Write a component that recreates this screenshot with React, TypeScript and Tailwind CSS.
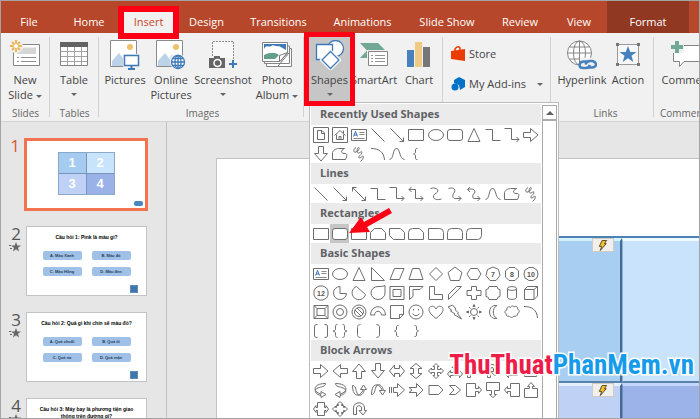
import React from "react";

type ShapeDef = { name: string; d?: string; node?: React.ReactNode };

const LINES: ShapeDef[] = [
  { name: "Line", d: "M1.5 1.5L14.5 14.5" },
  { name: "Arrow", d: "M1.5 1.5L14.5 14.5M10.5 14.5H14.5V10.5" },
  { name: "Double Arrow", d: "M1.5 1.5L14.5 14.5M10.5 14.5H14.5V10.5M1.5 5.5V1.5H5.5" },
  { name: "Elbow Connector", d: "M.5 2.5H7.5V13.5H15.5" },
  { name: "Elbow Arrow Connector", d: "M.5 1.5H7.5V12.5H15M12.5 10L15 12.5L12.5 15" },
  { name: "Elbow Double Connector", d: "M1 3.5H7.5V12.5H15M12.5 10L15 12.5L12.5 15M3.5 1L1 3.5L3.5 6" },
  { name: "Curved Connector", d: "M2.5 2.5C7 1 11 3 9.5 6C8 8 5 8 5.5 11C6 14 10 14 13.5 13" },
  { name: "Curved Arrow Connector", d: "M1.5 2.5C6 1 9 3 7.5 6C5 9 5 13 9 12.5H14M11.5 10L14 12.5L11.5 15" },
  { name: "Curved Double Connector", d: "M1.5 3.5C7 2 10 4 8.5 7C6 9 6 13 9 12.5H14M11.5 10L14 12.5L11.5 15M4 1L1.5 3.5L4 6" },
  { name: "Curve", d: "M.5 13.5C5 13 3.5 2.5 7.5 2.5S10 13 15.5 13.5" },
  { name: "Freeform", d: "M.5 13.5V6.5C2 3 4 3 6.5 2.5H12.5C8 5 9 7 12 7.5C16 7 15 10 13.5 13.5Z" },
  { name: "Scribble", d: "M5 1.5C2 3 2 7 5 6C8 5 9 1 7.5 1.5C5 3 6 9 9 6.5C12 4 11 8 9 9.5C6 12 9 13 11 10.5C13 9 13 13 9.5 15.5" },
];

const [line, arrow, , elbow, elbowArrow, , , , , curve, freeform, scribble] = LINES;

const textBox: ShapeDef = {
  name: "Text Box",
  node: (
    <>
      <path d="M.5 2.5H15.5V13.5H.5Z" />
      <path d="M2.5 9.5L4.5 4.5L6.5 9.5M3 8H6" stroke="#2f6fb5" />
      <path d="M8.5 5.5H13.5M8.5 7.5H13.5M2.5 11.5H13.5" stroke="#8a8a8a" />
    </>
  ),
};
const rect: ShapeDef = { name: "Rectangle", d: "M.5 2.5H15.5V13.5H.5Z" };
const oval: ShapeDef = { name: "Oval", node: <ellipse cx="8" cy="8" rx="7.5" ry="5.5" /> };
const rounded: ShapeDef = { name: "Rounded Rectangle", node: <rect x=".5" y="2.5" width="15" height="11" rx="2.5" /> };
const triangle: ShapeDef = { name: "Triangle", d: "M8 1.5L14 14.5H2Z" };
const rightArrow: ShapeDef = { name: "Right Arrow", d: "M.5 5.5H7.5V1.5L15 8L7.5 14.5V10.5H.5Z" };
const downArrow: ShapeDef = { name: "Down Arrow", d: "M5.5 .5V7.5H1.5L8 15L14.5 7.5H10.5V.5Z" };
const leftBrace: ShapeDef = { name: "Left Brace", d: "M9.5 2.5C7.5 2.5 7.5 3 7.5 5S7.5 7.5 5.5 8C7.5 8.5 7.5 9 7.5 11S7.5 13.5 9.5 13.5" };

const digits = (text: string) => (
  <text x="8" y="11" textAnchor="middle" fontSize="7" fontWeight="700" fill="#555" stroke="none" fontFamily="Liberation Sans, sans-serif">
    {text}
  </text>
);

const RECENT: ShapeDef[] = [
  { name: "Document Button", d: "M.5 .5H15.5V15.5H.5ZM4.5 3.5H9L11.5 6V12.5H4.5ZM8.5 3.5V6.5H11.5" },
  { name: "Home Button", d: "M.5 .5H15.5V15.5H.5ZM2.5 8.5L8 3.5L13.5 8.5M4.5 7.5V12.5H11.5V7.5M7 12.5V9.5H9V12.5M11.5 6V3.5" },
  textBox, line, arrow, rect, oval, rounded, triangle, elbow, elbowArrow, rightArrow,
  downArrow, freeform, scribble,
  { name: "Arc", d: "M1 2.5C9 2.5 14 6 14.5 14" },
  curve, leftBrace,
];

const RECTANGLES: ShapeDef[] = [
  rect, rounded,
  { name: "Snip Single Corner", d: "M.5 2.5H12L15.5 6V13.5H.5Z" },
  { name: "Snip Same Side Corner", d: "M4.5 2.5H11.5L15.5 6.5V13.5H.5V6.5Z" },
  { name: "Snip Diagonal Corner", d: "M.5 2.5H11.5L15.5 6.5V13.5H4.5L.5 9.5Z" },
  { name: "Snip and Round Corner", d: "M4.5 2.5H11.5L15.5 6.5V13.5H.5V6.5Q.5 2.5 4.5 2.5Z" },
  { name: "Round Single Corner", d: "M.5 2.5H11.5Q15.5 2.5 15.5 6.5V13.5H.5Z" },
  { name: "Round Same Side Corner", d: "M4.5 2.5H11.5Q15.5 2.5 15.5 6.5V13.5H.5V6.5Q.5 2.5 4.5 2.5Z" },
  { name: "Round Diagonal Corner", d: "M4.5 2.5H15.5V9.5Q15.5 13.5 11.5 13.5H.5V6.5Q.5 2.5 4.5 2.5Z" },
];

const BASIC: ShapeDef[] = [
  textBox, oval, triangle,
  { name: "Right Triangle", d: "M1.5 1.5V14.5H14.5Z" },
  { name: "Parallelogram", d: "M5.5 2.5H15L10.5 13.5H1Z" },
  { name: "Trapezoid", d: "M4.5 2.5H11.5L15 13.5H1Z" },
  { name: "Diamond", d: "M8 1.5L14.5 8L8 14.5L1.5 8Z" },
  { name: "Pentagon", d: "M8 1L15 6.5L12.5 14.5H3.5L1 6.5Z" },
  { name: "Hexagon", d: "M4.5 2.5H11.5L15 8L11.5 13.5H4.5L1 8Z" },
  { name: "Heptagon", node: <><path d="M8 1L13.5 3.5L15 9.5L11 14.5H5L1 9.5L2.5 3.5Z" />{digits("7")}</> },
  { name: "Octagon", node: <><path d="M5 1.5H11L14.5 5V11L11 14.5H5L1.5 11V5Z" />{digits("8")}</> },
  { name: "Decagon", node: <><path d="M6 1.5H10L14 4L15 8L14 12L10 14.5H6L2 12L1 8L2 4Z" />{digits("10")}</> },
  { name: "Dodecagon", node: <><path d="M6 1L10 1L13.5 3L15 6V10L13.5 13L10 15H6L2.5 13L1 10V6L2.5 3Z" />{digits("12")}</> },
  { name: "Pie", d: "M8 1.5A6.5 6.5 0 1 0 14.5 8.5H8Z" },
  { name: "Chord", d: "M5.5 1.5L14.5 9.5A6.8 6.8 0 1 1 5.5 1.5Z" },
  { name: "Teardrop", d: "M15 .5V8A7 6.5 0 1 1 8 1.5C11 1.5 13 1.5 15 .5Z" },
  { name: "Frame", d: "M1 1.5H15V14.5H1ZM4 4.5H12V11.5H4Z" },
  { name: "Half Frame", d: "M1.5 1.5H15L12 4.5H5V11.5L1.5 14.5Z" },
  { name: "L-Shape", d: "M1.5 1.5H6.5V9.5H14.5V14.5H1.5Z" },
  { name: "Diagonal Stripe", d: "M1.5 14.5V9.5L9.5 1.5H14.5Z" },
  { name: "Cross", d: "M5.5 1.5H10.5V5.5H15V10.5H10.5V14.5H5.5V10.5H1V5.5H5.5Z" },
  { name: "Plaque", d: "M4 1.5H12Q12 4.5 15 4.5V11.5Q12 11.5 12 14.5H4Q4 11.5 1 11.5V4.5Q4 4.5 4 1.5Z" },
  { name: "Can", d: "M3.5 3.5V12.5C3.5 15 12.5 15 12.5 12.5V3.5C12.5 1 3.5 1 3.5 3.5C3.5 6 12.5 6 12.5 3.5" },
  { name: "Cube", d: "M1.5 4.5L4.5 1.5H14.5V11L11 14.5H1.5ZM1.5 4.5H11V14.5M11 4.5L14.5 1.5" },
  { name: "Bevel", d: "M1 1.5H15V14.5H1ZM4 4.5H12V11.5H4ZM1 1.5L4 4.5M15 1.5L12 4.5M1 14.5L4 11.5M15 14.5L12 11.5" },
  { name: "Donut", node: <><circle cx="8" cy="8" r="7" /><circle cx="8" cy="8" r="3.5" /></> },
  { name: "No Symbol", node: <><circle cx="8" cy="8" r="7" /><circle cx="8" cy="8" r="4.5" /><path d="M4 6L10 12M6 4L12 10" /></> },
  { name: "Block Arc", d: "M.5 11C1 0 15 0 15.5 11H11.5C11 6 5 6 4.5 11Z" },
  { name: "Folded Corner", d: "M1.5 1.5H14.5V10.5L10.5 14.5H1.5ZM10.5 14.5V10.5H14.5" },
  { name: "Smiley Face", node: <><circle cx="8" cy="8" r="7" /><path d="M4.5 9.5Q8 14 11.5 9.5M5.5 5V6.5M10.5 5V6.5" /></> },
  { name: "Heart", d: "M8 14.5C1 9 0 6 1.5 3.5C4 1 7 2.5 8 5C9 2.5 12 1 14.5 3.5C16 6 15 9 8 14.5Z" },
  { name: "Lightning Bolt", d: "M5.5 1L9 5L8 5.5L11.5 9L10.5 9.5L14.5 15L7 10.5L8 10L3.5 7L5 6.5L1 3Z" },
  { name: "Sun", node: <><circle cx="8" cy="8" r="3.5" /><path d="M7 2.5L8 .5L9 2.5ZM7 13.5L8 15.5L9 13.5ZM2.5 7L.5 8L2.5 9ZM13.5 7L15.5 8L13.5 9ZM3 3L4.5 4.5M13 3L11.5 4.5M3 13L4.5 11.5M13 13L11.5 11.5" /></> },
  { name: "Moon", d: "M12 1.5C2 0 2 16 12 14.5C7 12 7 4 12 1.5Z" },
  { name: "Cloud", d: "M3 6C2 3 5 2 6.5 3.5C7 1.5 10 2 10 3C12 1.5 14 3 13.5 5C16 6 15.5 9 13.5 9.5C14 12 11 13 10 12C8 14.5 5.5 13 5 12C3 13 1.5 11 2.5 10C0 9 .5 6.5 3 6Z" },
  { name: "Arc", d: "M1 2.5C9 2.5 14 6 14.5 14" },
  { name: "Bracket Pair", d: "M4.5 1.5C2 1.5 1.5 2 1.5 4V12C1.5 14 2 14.5 4.5 14.5M11.5 1.5C14 1.5 14.5 2 14.5 4V12C14.5 14 14 14.5 11.5 14.5" },
  { name: "Brace Pair", d: "M5.5 1.5C3.5 1.5 3.5 2 3.5 5S3 7.5 1 8C3 8.5 3.5 9 3.5 11S3.5 14.5 5.5 14.5M10.5 1.5C12.5 1.5 12.5 2 12.5 5S13 7.5 15 8C13 8.5 12.5 9 12.5 11S12.5 14.5 10.5 14.5" },
  { name: "Left Bracket", d: "M9.5 1.5C6.5 2 6.5 3 6.5 5V11C6.5 13 6.5 14 9.5 14.5" },
  { name: "Right Bracket", d: "M6.5 1.5C9.5 2 9.5 3 9.5 5V11C9.5 13 9.5 14 6.5 14.5" },
  leftBrace,
  { name: "Right Brace", d: "M6.5 2.5C8.5 2.5 8.5 3 8.5 5S8.5 7.5 10.5 8C8.5 8.5 8.5 9 8.5 11S8.5 13.5 6.5 13.5" },
];

const BLOCK: ShapeDef[] = [
  rightArrow,
  { name: "Left Arrow", d: "M15.5 5.5H8.5V1.5L1 8L8.5 14.5V10.5H15.5Z" },
  { name: "Up Arrow", d: "M5.5 15.5V8.5H1.5L8 1L14.5 8.5H10.5V15.5Z" },
  downArrow,
  { name: "Left-Right Arrow", d: "M.5 8L5.5 2V5.5H10.5V2L15.5 8L10.5 14V10.5H5.5V14Z" },
  { name: "Up-Down Arrow", d: "M8 .5L14 5.5H10.5V10.5H14L8 15.5L2 10.5H5.5V5.5H2Z" },
  { name: "Quad Arrow", d: "M8 .5L11 3.5H9.5V6.5H12.5V5L15.5 8L12.5 11V9.5H9.5V12.5H11L8 15.5L5 12.5H6.5V9.5H3.5V11L.5 8L3.5 5V6.5H6.5V3.5H5Z" },
  { name: "Left-Right-Up Arrow", d: "M8 1.5L11 4.5H9.5V9.5H12.5V7.5L15.5 11L12.5 14.5V12.5H3.5V14.5L.5 11L3.5 7.5V9.5H6.5V4.5H5Z" },
  { name: "Bent Arrow", d: "M1.5 14.5V8Q1.5 3.5 6 3.5H10.5V1L15 5L10.5 9V6.5H6.5Q4.5 6.5 4.5 8V14.5Z" },
  { name: "U-Turn Arrow", d: "M2.5 14.5V6Q2.5 1.5 7 1.5T11.5 6V8.5H14.5L10 13L6 8.5H8.5V6Q8.5 4.5 7 4.5T5.5 6V14.5Z" },
  { name: "Left-Up Arrow", d: "M12 1L15 4.5H13.5V12.5H4.5V14.5L1 11L4.5 7.5V9.5H10.5V4.5H9Z" },
  { name: "Bent-Up Arrow", d: "M11.5 1.5L15 5.5H13.5V13.5H1.5V10.5H10.5V5.5H8Z" },
  { name: "Curved Right Arrow", d: "M12.5 1.5C3 1.5 0 6 3.5 10L8 12.5V9.5L13 12.5L8 15.5V13.5C1 12 1 7 5 6C8 4.5 12.5 5 12.5 1.5Z" },
  { name: "Curved Left Arrow", d: "M3.5 1.5C13 1.5 16 6 12.5 10L8 12.5V9.5L3 12.5L8 15.5V13.5C15 12 15 7 11 6C8 4.5 3.5 5 3.5 1.5Z" },
  { name: "Curved Up Arrow", d: "M1.5 3.5C1.5 13 6 15 10 11.5L12.5 7.5H9.5L12.5 3L15.5 7.5H13.5C12 14 7 15 6 11C4.5 8 5 3.5 1.5 3.5Z" },
  { name: "Curved Down Arrow", d: "M1.5 12.5C1.5 3 6 1 10 4.5L12.5 8.5H9.5L12.5 13L15.5 8.5H13.5C12 2 7 1 6 5C4.5 8 5 12.5 1.5 12.5Z" },
  { name: "Striped Right Arrow", d: "M.5 5V11M2.5 5V11M4.5 5.5H8.5V1.5L15.5 8L8.5 14.5V10.5H4.5Z" },
  { name: "Notched Right Arrow", d: "M1 5.5H8.5V1.5L15 8L8.5 14.5V10.5H1L4 8Z" },
  { name: "Pentagon Arrow", d: "M1 3.5H10.5L15 8L10.5 12.5H1Z" },
  { name: "Chevron", d: "M2.5 3.5H8.5L13.5 8L8.5 12.5H2.5L7 8Z" },
  { name: "Right Arrow Callout", d: "M.5 1.5H9.5V6.5H12.5V4.5L15.5 8L12.5 11.5V9.5H9.5V14.5H.5Z" },
  { name: "Down Arrow Callout", d: "M1.5 .5H14.5V8.5H9.5V12.5H11.5L8 15.5L4.5 12.5H6.5V8.5H1.5Z" },
  { name: "Left Arrow Callout", d: "M15.5 1.5H6.5V6.5H3.5V4.5L.5 8L3.5 11.5V9.5H6.5V14.5H15.5Z" },
  { name: "Up Arrow Callout", d: "M1.5 15.5H14.5V6.5H9.5V4.5H11.5L8 .5L4.5 4.5H6.5V6.5H1.5Z" },
  { name: "Left-Right Callout", d: "M4.5 1.5H11.5V6.5H13V4.5L15.5 8L13 11.5V9.5H11.5V14.5H4.5V9.5H3V11.5L.5 8L3 4.5V6.5H4.5Z" },
  { name: "Quad Arrow Callout", d: "M8 .5L11 3.5H9.5V4.5H11.5V6.5H12.5V5L15.5 8L12.5 11V9.5H11.5V11.5H9.5V12.5H11L8 15.5L5 12.5H6.5V11.5H4.5V9.5H3.5V11L.5 8L3.5 5V6.5H4.5V4.5H6.5V3.5H5Z" },
  { name: "Circular Arrow", d: "M2.5 13.5V7C2.5 0 13.5 0 13.5 7V9.5H15.5L12 14L8 9.5H10.5V7C10.5 4 5.5 4 5.5 7V13.5Z" },
];

const SECTIONS: { title: string; shapes: ShapeDef[]; selected?: number }[] = [
  { title: "Recently Used Shapes", shapes: RECENT },
  { title: "Lines", shapes: LINES },
  { title: "Rectangles", shapes: RECTANGLES, selected: 1 },
  { title: "Basic Shapes", shapes: BASIC },
  { title: "Block Arrows", shapes: BLOCK },
];

function ShapesMenu() {
  return (
    <div className="absolute top-[69px] left-[5px] z-10 flex w-[250px] border border-[#bdbdbd] bg-white p-px">
      <div className="w-[230px] pb-6">
        {SECTIONS.map((s) => (
          <section key={s.title}>
            <h2 className="h-[21px] bg-[#ebebeb] pl-[9px] text-[11px] leading-[20px] font-bold text-[#5f6266]">{s.title}</h2>
            <div className="grid grid-cols-12">
              {s.shapes.map((shape, i) => (
                <button
                  key={i}
                  aria-label={shape.name}
                  className={i === s.selected ? "flex h-[19px] items-center justify-center bg-[#c6c6c6]" : "flex h-[19px] items-center justify-center"}
                >
                  <svg viewBox="0 0 16 16" className="size-4 shrink-0" fill={i === s.selected ? "#fff" : "none"} stroke="#6e6e6e">
                    {shape.node ?? <path d={shape.d} />}
                  </svg>
                </button>
              ))}
            </div>
          </section>
        ))}
      </div>
      <div className="ml-px flex w-[15px] flex-col pt-px">
        <button aria-label="Scroll up" className="flex h-[15px] items-center justify-center border border-[#ababab] bg-white">
          <span className="border-x-4 border-b-4 border-x-transparent border-b-[#606060]" />
        </button>
        <div className="flex-1 border border-[#ababab] bg-white" />
      </div>
    </div>
  );
}

const Caret = () => <span className="inline-block border-x-[3px] border-t-[3px] border-x-transparent border-t-[#666] align-middle" />;

function RibbonButton({ icon, lines, width, caret, className = "" }: { icon: React.ReactNode; lines: string[]; width: string; caret?: boolean; className?: string }) {
  return (
    <button className={`flex shrink-0 flex-col items-center ${width} ${className}`}>
      <span className="flex h-[35px] items-center justify-center">{icon}</span>
      {lines.map((l, i) => (
        <span key={l} className="h-[15px] leading-[15px] whitespace-nowrap">
          {l}
          {caret && i === 1 && <> <Caret /></>}
        </span>
      ))}
      {caret && lines.length === 1 && <span className="flex h-[15px] items-center"><Caret /></span>}
    </button>
  );
}

function Group({ label, className, children }: { label?: string; className: string; children: React.ReactNode }) {
  return (
    <div className={`relative flex shrink-0 flex-col ${className}`}>
      <div className="flex h-[72px] pt-1">{children}</div>
      <div className="text-center text-[10px] leading-4 text-[#666]">{label}</div>
      <span className="absolute top-1 right-0 bottom-1 w-px bg-[#d2d2d2]" />
    </div>
  );
}

const NewSlideIcon = (
  <svg width="30" height="30" viewBox="0 0 30 30" fill="none">
    <path d="M3.5 4.5H29.5V25.5H3.5Z" fill="#fff" stroke="#858585" />
    <path d="M12 7.5H26V14H7V10Z" fill="#d6d6d6" />
    <path d="M7 17.5H9M11 17.5H26M7 21.5H9M11 21.5H26" stroke="#8e8e8e" />
    <circle cx="6" cy="6" r="7" fill="#f1f1f1" />
    <path d="M6 0V3M6 9V12M0 6H3M9 6H12M2 2L4 4M8 8L10 10M2 10L4 8M8 4L10 2" stroke="#ecb455" strokeWidth="2" />
    <circle cx="6" cy="6" r="2.5" fill="#fff" stroke="#ecb455" />
  </svg>
);
const TableIcon = (
  <svg width="28" height="28" viewBox="0 0 28 28" fill="none">
    <path d="M.5 1.5H27.5V24.5H.5Z" fill="#fff" stroke="#858585" />
    <path d="M0 1H28V6H0Z" fill="#636363" />
    <path d="M1 10.5H27M1 15.5H27M1 20.5H27M7.5 6V24M14.5 6V24M21.5 6V24" stroke="#a2a2a2" />
  </svg>
);
const photo = (
  <>
    <path d="M.5 .5H26.5V26.5H.5Z" fill="#fff" stroke="#8a8a8a" />
    <path d="M2 26V21L9 13L19 26Z" fill="#bcd2e9" />
    <path d="M13 17L16 14L21 19V26H19Z" fill="#dbe6f2" />
    <circle cx="20" cy="7" r="3" fill="#edc069" />
  </>
);
const PicturesIcon = (
  <svg width="30" height="30" viewBox="0 0 30 30" fill="none">
    {photo}
    <path d="M13 14H30V30H13Z" fill="#f1f1f1" />
    <path d="M14.5 15.5H28.5V25.5H14.5Z" fill="#fff" stroke="#3e79b8" strokeWidth="1.5" />
    <path d="M21.5 26V28.5M18 29H25" stroke="#3e79b8" strokeWidth="2" />
  </svg>
);
const OnlineIcon = (
  <svg width="30" height="30" viewBox="0 0 30 30" fill="none">
    {photo}
    <circle cx="22" cy="22" r="8" fill="#f1f1f1" />
    <g stroke="#3e79b8" strokeWidth="1.3">
      <circle cx="22" cy="22" r="6.5" fill="#fff" />
      <ellipse cx="22" cy="22" rx="3" ry="6.5" />
      <path d="M15.5 22H28.5M17 18.5H27M17 25.5H27M22 15.5V28.5" />
    </g>
  </svg>
);
const ScreenshotIcon = (
  <svg width="30" height="30" viewBox="0 0 30 30" fill="none">
    <path d="M4.5 16V1.5H25.5V19" fill="#f7f7f7" stroke="#8a8a8a" strokeDasharray="2 1" />
    <path d="M1 18H6V16H12V18H17V28H1Z" fill="#666" />
    <circle cx="9.5" cy="23" r="3.5" fill="#666" stroke="#fff" strokeWidth="1.5" />
    <path d="M25 20V28M21 24H29" stroke="#3e79b8" strokeWidth="2" />
  </svg>
);
const AlbumIcon = (
  <svg width="30" height="28" viewBox="0 0 30 28" fill="none">
    <path d="M5 7.5H29.5V25.5H4.5V22" fill="#fff" stroke="#858585" />
    <path d="M3 5H27.5V22.5H2.5V20" fill="#fff" stroke="#858585" />
    <path d="M.5 1.5H25.5V12L18 20.5H.5Z" fill="#fff" stroke="#858585" />
    <path d="M2 3H24V11H2Z" fill="#3e79b8" />
    <path d="M2 8C5 3 7 7 9 5C12 3 13 6 17 5L24 9V12H2Z" fill="#fff" />
    <path d="M2 18V14C8 11 13 11 17 14L13 18Z" fill="#63a08b" />
    <path d="M17.5 20.5V14.5L25.5 11.5L18 20.5M16 25L27 12" fill="#fff" stroke="#777" />
  </svg>
);
const ShapesIcon = (
  <svg width="30" height="30" viewBox="0 0 30 30" fill="#fff" stroke="#3e79b8" strokeWidth="1.3">
    <circle cx="20.5" cy="8.5" r="8" />
    <path d="M1.5 4.5H17.5V19.5H1.5Z" />
    <path d="M15.5 11L24.5 20L15.5 29L6.5 20Z" stroke="#fff" strokeWidth="3" />
    <path d="M15.5 11.5L24 20L15.5 28.5L7 20Z" />
  </svg>
);
const SmartArtIcon = (
  <svg width="30" height="28" viewBox="0 0 30 28" fill="none">
    <path d="M1 2H19L27 10L21 17H1L8 9.5Z" fill="#70a795" />
    <path d="M8 9H30V26H8Z" fill="#f1f1f1" />
    <path d="M9.5 10.5H28.5V24.5H9.5Z" fill="#fff" stroke="#858585" />
    <path d="M12 14.5H14M16 14.5H26M12 17.5H14M16 17.5H26M12 20.5H14M16 20.5H26" stroke="#929292" />
  </svg>
);
const ChartIcon = (
  <svg width="24" height="28" viewBox="0 0 24 28">
    <path d="M0 9H7V26H0Z" fill="#4881bb" />
    <path d="M8 1H15V26H8Z" fill="#efca82" />
    <path d="M16 6H23V26H16Z" fill="#777" />
  </svg>
);
const HyperlinkIcon = (
  <svg width="30" height="30" viewBox="0 0 30 30" fill="none">
    <g stroke="#858585">
      <circle cx="12.5" cy="13" r="12" fill="#fff" />
      <ellipse cx="12.5" cy="13" rx="6" ry="12" />
      <path d="M.5 13H24.5M2.5 7H22.5M2.5 19H22.5M12.5 1V25" />
    </g>
    <path d="M13 18H30V30H13Z" fill="#f1f1f1" />
    <g stroke="#4781bd" strokeWidth="2.5">
      <path d="M20 21.5H16.5Q12.5 22 12.5 25T16 28H19Q22 28 23 25" />
      <path d="M21 27.5H25Q29 27 29 24.5T25.5 21H23Q19.5 21 18.5 24.5" />
    </g>
  </svg>
);
const ActionIcon = (
  <svg width="26" height="28" viewBox="0 0 26 28">
    <path d="M2.5 3.5H23.5V23.5H2.5Z" fill="#f7f7f7" stroke="#999" />
    <path d="M1 2H4V5H1ZM22 2H25V5H22ZM1 22H4V25H1ZM22 22H25V25H22Z" fill="#777" />
    <path d="M13 5L15.3 11H21.5L16.5 14.8L18.3 21L13 17.3L7.7 21L9.5 14.8L4.5 11H10.7Z" fill="#4781bd" />
  </svg>
);
const CommentIcon = (
  <svg width="32" height="30" viewBox="0 0 32 30">
    <path d="M2.5 5.5H31.5V21.5H13L8.5 26.5V21.5H2.5Z" fill="#fff" stroke="#858585" />
    <path d="M0 0H13V13H0Z" fill="#f1f1f1" />
    <path d="M4 1H8V5H12V9H8V13H4V9H0V5H4Z" fill="#70a795" />
  </svg>
);

const TABS = [
  { label: "File", width: "w-[56px]" },
  { label: "Home", width: "w-[64px]" },
  { label: "Insert", width: "w-[55px]", active: true },
  { label: "Design", width: "w-[61px]" },
  { label: "Transitions", width: "w-[83px]" },
  { label: "Animations", width: "w-[85px]" },
  { label: "Slide Show", width: "w-[84px]" },
  { label: "Review", width: "w-[62px]" },
  { label: "View", width: "w-[56px]" },
  { label: "Format", width: "w-[82px]", dark: true },
];

const SLIDES = [
  { n: 2, title: "Câu hỏi 1: Pink là màu gì?", answers: ["A. Màu Xanh", "B. Màu đỏ", "C. Màu Hồng", "D. Màu đen"] },
  { n: 3, title: "Câu hỏi 2: Quả gì khi chín sẽ màu đỏ?", answers: ["A. Quả chuối", "B. Quả ổi", "C. Quả na", "D. Quả mận"] },
  { n: 4, title: "Câu hỏi 3: Máy bay là phương tiện giao thông trên đường gì?", answers: [] },
];

function Thumbnails() {
  return (
    <aside className="w-[166px] shrink-0 overflow-hidden border-r border-[#c3c3c3] pt-4 text-[17px] text-[#555]">
      <div className="flex h-[88px]">
        <span className="w-[23px] pr-1 text-right leading-4 text-[#d65a3c]">1</span>
        <div className="relative h-[73px] w-[124px] border-[3px] border-[#f4734f] bg-white pt-[11px]">
          <div className="mx-auto grid h-[43px] w-[57px] grid-cols-2 grid-rows-2 gap-px border border-[#8aa9c8] bg-[#7795b8] text-center font-['Liberation_Sans',sans-serif] text-[13px] leading-5 font-bold text-white">
            <span className="bg-[#a5ccf0]">1</span>
            <span className="bg-[#c8e3fc]">2</span>
            <span className="bg-[#bfd1f4]">3</span>
            <span className="bg-[#9ab2e8]">4</span>
          </div>
          <span className="absolute right-[2px] bottom-[2px] h-[5px] w-[9px] rounded-xs bg-[#4788c2]" />
        </div>
      </div>
      {SLIDES.map((s) => (
        <div key={s.n} className="flex h-[86px]">
          <div className="w-[25px] pr-[5px] text-right leading-4 whitespace-nowrap">
            {s.n}
            <svg viewBox="0 0 12 10" className="ml-auto h-[10px] w-3" fill="#666">
              <path d="M7 0L8.3 3.5H12L9 5.8L10 9.5L7 7.3L4 9.5L5 5.8L2 3.5H5.7Z" />
              <path d="M0 3H2V4H0ZM1 6H3V7H1Z" />
            </svg>
          </div>
          <div className="relative h-[70px] w-[121px] border border-[#c4c4c4] bg-white pt-[7px] font-['Liberation_Sans',sans-serif] text-black">
            <p className="mx-auto w-[96px] text-center text-[5px] leading-[7px] font-bold">{s.title}</p>
            <div className="mx-auto mt-2.5 grid w-[88px] grid-cols-2 gap-x-[10px] gap-y-[7px] text-center text-[4px] leading-[9px]">
              {s.answers.map((a) => (
                <span key={a} className="h-[9px] rounded-xs bg-[#9fc1e8] font-bold text-[#293d57]">{a}</span>
              ))}
            </div>
            {s.answers.length > 0 && <span className="absolute right-[8px] bottom-[2px] size-2 border border-[#5b8db8] bg-[#3f77a8]" />}
          </div>
        </div>
      ))}
    </aside>
  );
}

const Badge = () => (
  <span className="absolute -top-[3px] right-[6px] flex h-[14px] w-[22px] items-center justify-center border border-[#d0ccc4] bg-[#f1f0ee]">
    <svg viewBox="0 0 10 12" className="h-[11px] w-[10px]">
      <path d="M4 .5H9L6.5 4H8.5L2 11.5L3.5 7H1Z" fill="#f3bf2e" stroke="#51421c" />
    </svg>
  </span>
);

export default function App() {
  return (
    <div className="relative flex h-screen w-full flex-col overflow-hidden border border-[#a3a3a3] bg-[#e6e6e6] font-['Open_Sans','Noto_Sans',sans-serif] text-[11px] text-[#444]">
      <nav className="flex h-8 shrink-0 bg-[#b7472a] text-white">
        {TABS.map((t) => (
          <button
            key={t.label}
            className={`${t.width} relative shrink-0 pt-[9px] leading-4 whitespace-nowrap ${t.active ? "bg-[#f1f1f1] text-[#c8472a]" : t.dark ? "bg-[#903822]" : ""}`}
          >
            {t.label}
            {t.active && <span className="absolute inset-x-0 top-0 h-[5px] bg-[#b7472a]" />}
            {t.active && <span className="absolute top-[5px] -left-[3px] z-20 h-[33px] w-[61px] border-[6px] border-[#fe0015]" />}
          </button>
        ))}
      </nav>

      <header className="relative z-10 flex h-[89px] shrink-0 border-b border-[#d2d2d2] bg-[#f1f1f1]">
        <Group label="Slides" className="w-[49px]">
          <RibbonButton icon={NewSlideIcon} lines={["New", "Slide"]} caret width="w-12" />
        </Group>
        <Group label="Tables" className="w-[49px]">
          <RibbonButton icon={TableIcon} lines={["Table"]} caret width="w-12" />
        </Group>
        <Group label="Images" className="w-[205px] pl-[2px]">
          <RibbonButton icon={PicturesIcon} lines={["Pictures"]} width="w-12" />
          <RibbonButton icon={OnlineIcon} lines={["Online", "Pictures"]} width="w-11" />
          <RibbonButton icon={ScreenshotIcon} lines={["Screenshot"]} caret width="w-[60px]" />
          <RibbonButton icon={AlbumIcon} lines={["Photo", "Album"]} caret width="w-12" />
        </Group>
        <Group className="z-10 w-[139px] pl-[4px]">
          <RibbonButton icon={ShapesIcon} lines={["Shapes"]} caret width="w-[43px]" className="bg-[#c6c6c6]" />
          <RibbonButton icon={SmartArtIcon} lines={["SmartArt"]} width="w-[46px]" />
          <RibbonButton icon={ChartIcon} lines={["Chart"]} width="w-11" />
          <ShapesMenu />
          <span className="absolute -top-px left-0 z-20 h-[74px] w-[51px] border-[5px] border-[#fe0015]" />
        </Group>
        <Group className="w-[108px] pl-[8px]">
          <div className="flex flex-col items-start">
            <button className="flex h-[34px] items-center gap-[3px]">
              <svg width="15" height="16" viewBox="0 0 15 16">
                <path d="M0 5L14 3V15L0 13Z" fill="#eb3c00" />
                <path d="M4 6V3Q7 -1 9 2V6" fill="none" stroke="#eb3c00" strokeWidth="1.5" />
              </svg>
              Store
            </button>
            <button className="flex h-[26px] items-center gap-[3px] whitespace-nowrap">
              <svg width="15" height="16" viewBox="0 0 15 16" fill="#0072c6">
                <path d="M8 1L14 4V11L9 14L8 9L3 7V4Z" />
                <circle cx="4" cy="11" r="3.5" />
              </svg>
              My Add-ins
              <span className="ml-2 flex"><Caret /></span>
            </button>
          </div>
        </Group>
        <Group label="Links" className="w-[103px] pl-[6px]">
          <RibbonButton icon={HyperlinkIcon} lines={["Hyperlink"]} width="w-[50px]" />
          <RibbonButton icon={ActionIcon} lines={["Action"]} width="w-[42px]" />
        </Group>
        <div className="min-w-0 flex-1 overflow-hidden pl-[6px]">
          <div className="flex h-[72px] pt-1">
            <RibbonButton icon={CommentIcon} lines={["Comment"]} width="w-[54px]" />
          </div>
          <div className="text-[10px] leading-4 text-[#666]">Comments</div>
        </div>
      </header>

      <main className="flex min-h-0 flex-1">
        <Thumbnails />
        <section className="ml-[49px] min-w-0 flex-1 overflow-hidden pt-9">
          <div className="h-[520px] border-t border-l border-[#c3c3c3] bg-white pt-[77px] pl-[105px]">
            <div className="grid h-[292px] grid-cols-[300px_1fr] grid-rows-2 border-t-2 border-[#4c82b4]">
              <div className="relative border-t-[3px] border-r-2 border-b-2 border-t-[#d7f2ff] border-r-[#456b91] border-b-[#5983aa] bg-[#a8cef2]"><Badge /></div>
              <div className="border-t-[3px] border-b-2 border-l border-t-[#eefaff] border-b-[#5983aa] border-l-[#8eb3d8] bg-[#c9e3fd]" />
              <div className="relative border-t-[3px] border-r-2 border-t-[#e4efff] border-r-[#456b91] bg-[#bfd2f5]"><Badge /></div>
              <div className="border-t-[3px] border-l border-t-[#c2d6ff] border-l-[#728dc6] bg-[#9bb3e9]" />
            </div>
          </div>
        </section>
      </main>

      <svg className="absolute top-[206px] left-[346px] z-20 h-[30px] w-[48px]" viewBox="0 0 48 30" fill="#fe0015">
        <path d="M2 26L14 10L17 15L42 1L45 6L20 20L23 25Z" />
      </svg>
      <p className="absolute right-[5px] bottom-[37px] z-20 font-['Roboto_Condensed','Roboto','Liberation_Sans',sans-serif] text-[27px] leading-8 font-bold whitespace-nowrap text-[#ed1c48] [paint-order:stroke] [-webkit-text-stroke:3px_#fff]">
        ThuThuat<span className="text-[#169bea]">PhanMem.vn</span>
      </p>
    </div>
  );
}
